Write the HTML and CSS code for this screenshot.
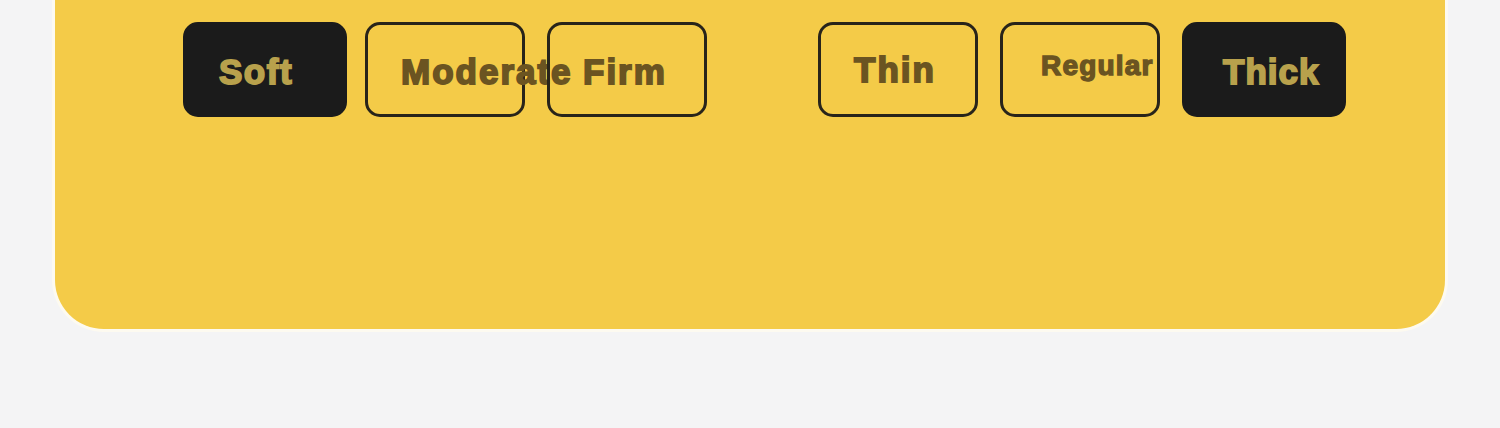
FILE: index.html
```html
<!DOCTYPE html>
<html lang="en">

<head>
    <meta charset="UTF-8">
    <meta name="viewport" content="width=device-width, initial-scale=1.0">
    <title>Brush Options</title>
    <link rel="stylesheet" href="styles.css">
</head>

<body>
    <div class="panel">
        <div class="options">
            <!-- pressure -->
            <div class="group">
                <button class="opt active">Soft</button>
                <button class="opt">Moderate</button>
                <button class="opt">Firm</button>
            </div>
            <!-- stroke width -->
            <div class="group">
                <button class="opt opt-thin">Thin</button>
                <button class="opt opt-small">Regular</button>
                <button class="opt active">Thick</button>
            </div>
        </div>
    </div>
</body>

</html>
```

FILE: styles.css
```css
* {
    padding: 0;
    margin: 0;
    box-sizing: border-box;
}

body {
    background-color: #f4f4f5;
    height: 100vh;
    overflow: hidden;
}

.panel {
    margin: 0 52px;
    height: 332px;
    background-color: #f4cb48;
    border: 3px solid #fdfaf0;
    border-top: none;
    border-radius: 0 0 52px 52px;
    padding: 22px 0 0 128px;
}

.options {
    display: flex;
    gap: 89px;
}

.group {
    display: grid;
    grid-template-columns: repeat(3, 182px);
}

.opt {
    display: flex;
    align-items: center;
    width: 160px;
    height: 95px;
    padding: 5px 0 0 33px;
    border: 3px solid #28241a;
    border-radius: 15px;
    background: transparent;
    color: #6b5421;
    font-family: "Liberation Sans", Arial, sans-serif;
    font-weight: 700;
    font-size: 35px;
    letter-spacing: 2px;
    -webkit-text-stroke: 1.8px currentColor;
    white-space: nowrap;
    overflow: visible;
    cursor: pointer;
}

.opt.active {
    width: 164px;
    background-color: #1b1b1b;
    border-color: #1b1b1b;
    color: #b8a14c;
    padding-left: 33px;
    letter-spacing: 1.5px;
}

.opt.active:last-child {
    padding-left: 38px;
    letter-spacing: 1px;
}

.opt-thin {
    padding-top: 0;
}

.opt-small {
    font-size: 28px;
    letter-spacing: 1.2px;
    -webkit-text-stroke: 1.4px currentColor;
    padding: 0 0 8px 38px;
}
```
